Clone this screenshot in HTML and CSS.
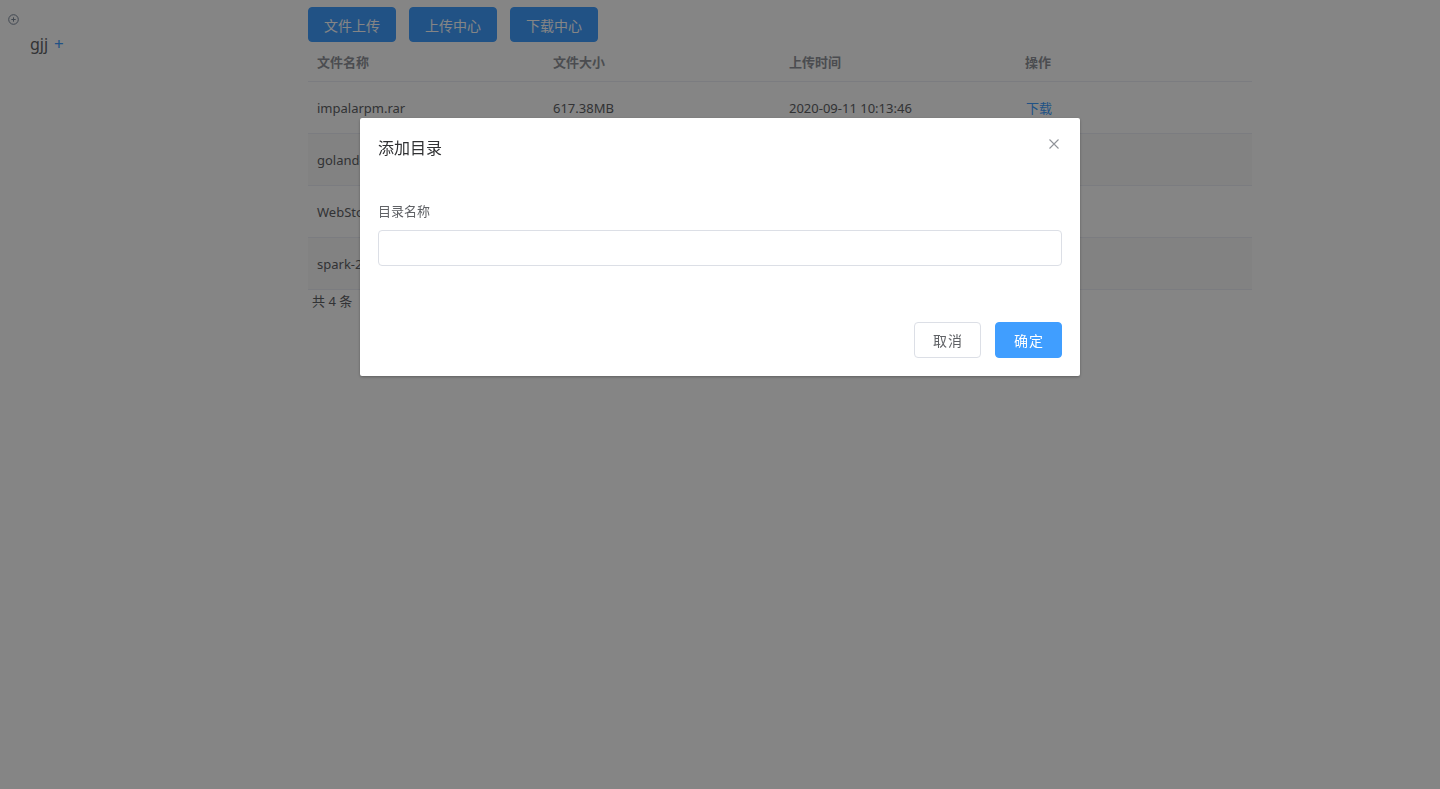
FILE: index.html
```html
<!DOCTYPE html>
<html lang="zh-CN">
<head>
<meta charset="utf-8">
<title>文件管理</title>
<link rel="stylesheet" href="styles.css">
</head>
<body>
<div class="layout">
  <aside class="aside">
    <div class="tree-root">
      <svg class="circle-plus" width="11" height="11" viewBox="0 0 11 11"><circle cx="5.5" cy="5.5" r="4.8" fill="none" stroke="#7d8a9c" stroke-width="1"/><path d="M3.3 5.5h4.4M5.5 3.3v4.4" stroke="#7d8a9c" stroke-width="1"/></svg>
    </div>
    <div class="tree-node"><span class="node-label">gjj</span><span class="node-add">+</span></div>
  </aside>
  <main class="main">
    <div class="toolbar">
      <button class="btn btn-primary">文件上传</button>
      <button class="btn btn-primary">上传中心</button>
      <button class="btn btn-primary">下载中心</button>
    </div>
    <div class="table">
      <div class="tr th">
        <div class="cell">文件名称</div>
        <div class="cell">文件大小</div>
        <div class="cell">上传时间</div>
        <div class="cell">操作</div>
      </div>
      <div class="tr">
        <div class="cell">impalarpm.rar</div>
        <div class="cell">617.38MB</div>
        <div class="cell">2020-09-11 10:13:46</div>
        <div class="cell"><a class="link">下载</a></div>
      </div>
      <div class="tr striped">
        <div class="cell">goland-2020.2.2.exe</div>
        <div class="cell">384.12MB</div>
        <div class="cell">2020-09-11 10:10:21</div>
        <div class="cell"><a class="link">下载</a></div>
      </div>
      <div class="tr">
        <div class="cell">WebStorm-2020.2.1.exe</div>
        <div class="cell">327.54MB</div>
        <div class="cell">2020-09-11 10:08:05</div>
        <div class="cell"><a class="link">下载</a></div>
      </div>
      <div class="tr striped">
        <div class="cell">spark-2.4.7-bin-hadoop2.7.tgz</div>
        <div class="cell">222.36MB</div>
        <div class="cell">2020-09-11 10:05:52</div>
        <div class="cell"><a class="link">下载</a></div>
      </div>
    </div>
    <div class="pager">共 4 条</div>
  </main>
</div>

<div class="overlay">
  <div class="dialog">
    <div class="dialog-header">
      <span class="dialog-title">添加目录</span>
      <svg class="dialog-close" width="12" height="12" viewBox="0 0 12 12"><path d="M1.5 1.5l9 9M10.5 1.5l-9 9" stroke="#909399" stroke-width="1.1"/></svg>
    </div>
    <div class="dialog-body">
      <div class="form-label">目录名称</div>
      <input class="input" type="text">
    </div>
    <div class="dialog-footer">
      <button class="btn btn-default">取消</button>
      <button class="btn btn-blue">确定</button>
    </div>
  </div>
</div>
</body>
</html>
```

FILE: styles.css
```css
* { box-sizing: border-box; }
html, body { margin: 0; padding: 0; height: 100%; }
body {
  font-family: "Noto Sans", "Noto Sans CJK SC", sans-serif;
  font-size: 13px;
  color: #606266;
  background: #ffffff;
}
.layout {
  display: flex;
  min-height: 100%;
}
.aside {
  width: 308px;
  flex: none;
  padding: 13px 0 0 8px;
}
.tree-root {
  height: 12px;
  display: flex;
  align-items: center;
}
.circle-plus { display: block; }
.tree-node {
  display: flex;
  align-items: center;
  gap: 6px;
  padding-left: 22px;
  margin-top: 8px;
  height: 22px;
  line-height: 22px;
}
.node-label { font-size: 16px; color: #606266; }
.node-add { font-size: 17px; color: #409eff; }

.main {
  width: 944px;
  flex: none;
}
.toolbar {
  display: flex;
  gap: 13px;
  padding-top: 7px;
}
.btn {
  font-family: "Noto Sans CJK SC", "Noto Sans", sans-serif;
  font-size: 14px;
  border-radius: 4px;
  cursor: pointer;
  line-height: 1;
}
.btn-primary {
  height: 35px;
  padding: 0 15px;
  background: #409eff;
  border: 1px solid #409eff;
  color: #ffffff;
}
.table { width: 944px; }
.tr {
  display: grid;
  grid-template-columns: repeat(4, 236px);
  height: 52px;
  border-bottom: 1px solid #ebeef5;
  align-items: center;
}
.tr.th {
  height: 40px;
  font-weight: bold;
  color: #909399;
  font-family: "Noto Sans CJK SC", sans-serif;
  font-size: 13px;
}
.tr.striped { background: #fafafa; }
.cell {
  padding: 0 10px 0 9px;
  white-space: nowrap;
  overflow: hidden;
}
.link { color: #409eff; font-family: "Noto Sans CJK SC", sans-serif; font-size: 13px; padding-left: 1px; }
.pager {
  padding-left: 4px;
  line-height: 22px;
  font-size: 13px;
  color: #606266;
}

.overlay {
  position: fixed;
  inset: 0;
  background: rgba(0, 0, 0, 0.48);
}
.dialog {
  position: relative;
  width: 720px;
  margin: 118px auto 0;
  background: #ffffff;
  border-radius: 2px;
  box-shadow: 0 1px 3px rgba(0, 0, 0, 0.3);
}
.dialog-header {
  position: relative;
  padding: 17px 18px 10px;
}
.dialog-title {
  display: block;
  font-family: "Noto Sans CJK SC", sans-serif;
  font-size: 16px;
  line-height: 24px;
  color: #303133;
}
.dialog-close {
  position: absolute;
  top: 20px;
  right: 20px;
}
.dialog-body {
  padding: 32px 18px 0;
}
.form-label {
  font-family: "Noto Sans CJK SC", sans-serif;
  font-size: 13px;
  line-height: 20px;
  color: #606266;
  margin-bottom: 9px;
}
.input {
  display: block;
  width: 100%;
  height: 36px;
  border: 1px solid #dcdfe6;
  border-radius: 4px;
  padding: 0 15px;
  background: #ffffff;
  outline: none;
}
.dialog-footer {
  display: flex;
  justify-content: flex-end;
  gap: 14px;
  padding: 56px 18px 18px;
}
.btn-default, .btn-blue {
  height: 36px;
  padding: 0 17px;
  letter-spacing: 1px;
  text-indent: 1px;
}
.btn-default {
  background: #ffffff;
  border: 1px solid #dcdfe6;
  color: #606266;
}
.btn-blue {
  background: #409eff;
  border: 1px solid #409eff;
  color: #ffffff;
}
```
